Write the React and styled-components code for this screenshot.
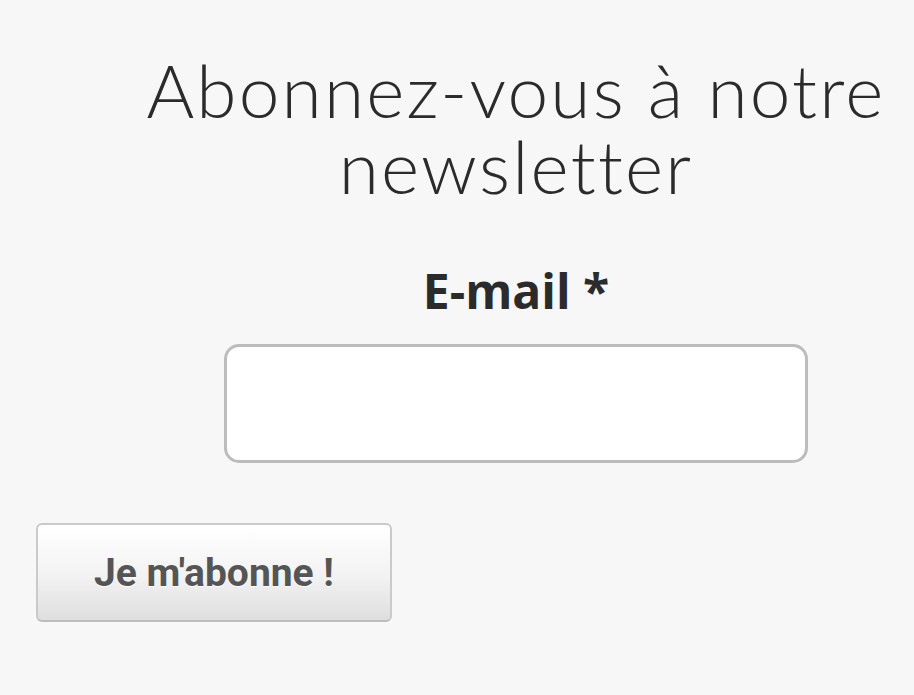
import React from 'react';
import styled, { createGlobalStyle } from 'styled-components';

const GlobalStyle = createGlobalStyle`
	html, body {
		margin: 0;
		padding: 0;
		background: #f7f7f7;
	}
`;

const Page = styled.div`
	width: 914px;
	min-height: 695px;
	background: #f7f7f7;
	overflow: hidden;
`;

const Form = styled.form`
	display: flex;
	flex-direction: column;
	padding: 52px 0 0 36px;
`;

const Centered = styled.div`
	display: flex;
	flex-direction: column;
	align-items: center;
	padding-left: 82px;
`;

const Title = styled.h2`
	margin: 0;
	font-family: Lato, 'Open Sans', sans-serif;
	font-weight: 300;
	font-size: 73px;
	line-height: 76px;
	color: #2b2b2b;
	text-align: center;
	letter-spacing: 2.2px;
	white-space: nowrap;
`;

const Label = styled.label`
	margin-top: 57px;
	font-family: 'Open Sans', sans-serif;
	font-weight: 700;
	font-size: 48px;
	line-height: 60px;
	color: #2b2b2b;
`;

const Input = styled.input`
	margin-top: 23px;
	box-sizing: border-box;
	width: 584px;
	height: 119px;
	border: 3px solid #bcbcbc;
	border-radius: 15px;
	background: #fff;
	outline: none;
	font-size: 36px;
	padding: 0 20px;
`;

const ButtonRow = styled.div`
	display: flex;
	margin-top: 60px;
`;

const Submit = styled.button`
	box-sizing: border-box;
	width: 356px;
	height: 99px;
	border: 2px solid #cacaca;
	border-bottom-color: #bdbdbd;
	border-radius: 6px;
	background: linear-gradient(to bottom, #ffffff 0%, #f2f2f2 55%, #dedede 100%);
	font-family: Roboto, 'Liberation Sans', sans-serif;
	font-weight: 700;
	font-size: 39px;
	color: #555;
	text-shadow: 0 1px 0 #fff;
	padding: 0;
	cursor: pointer;
`;

const App = () => {
	return (
		<Page>
			<GlobalStyle />
			<Form onSubmit={(e) => e.preventDefault()}>
				<Centered>
					<Title>
						Abonnez-vous à notre
						<br />
						newsletter
					</Title>
					<Label htmlFor="email">E-mail *</Label>
					<Input id="email" type="email" />
				</Centered>
				<ButtonRow>
					<Submit type="submit">Je m'abonne !</Submit>
				</ButtonRow>
			</Form>
		</Page>
	);
};

export default App;
